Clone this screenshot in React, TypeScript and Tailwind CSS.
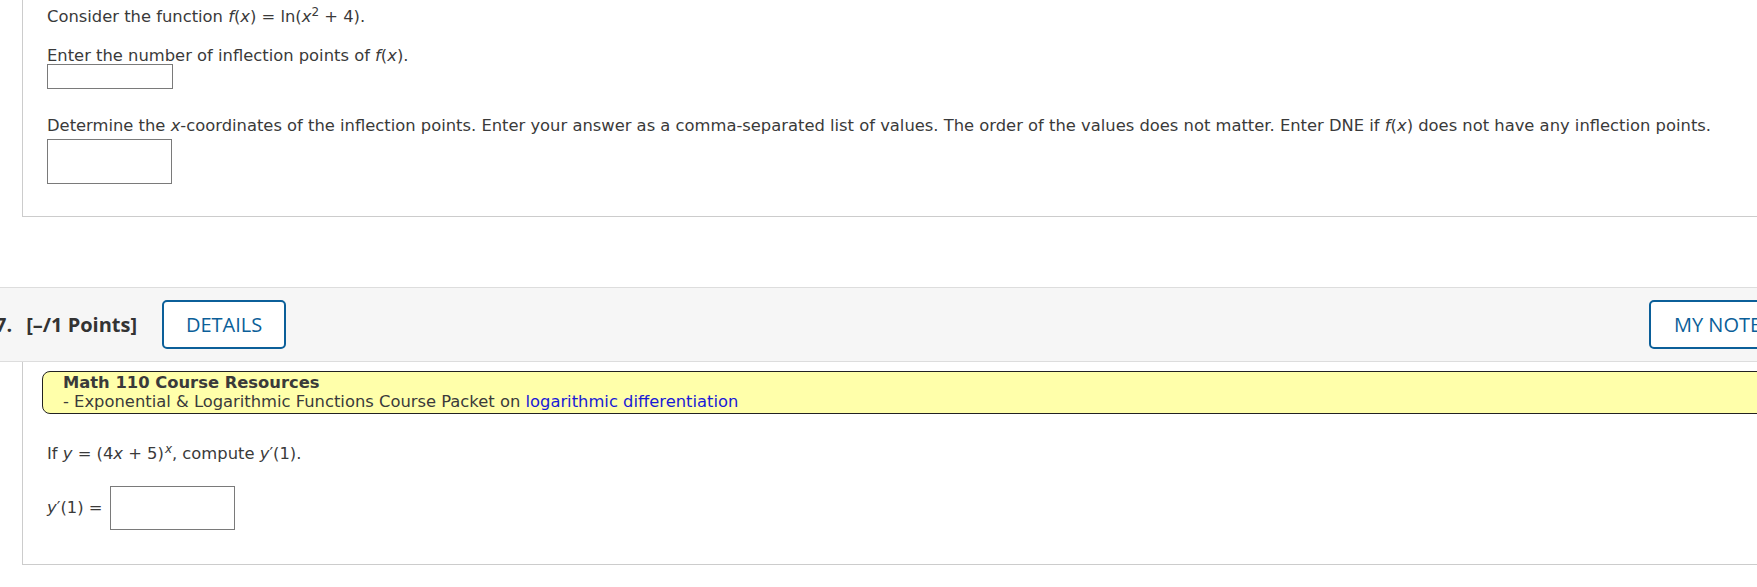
import React from "react";

const body = { fontFamily: '"DejaVu Sans", Verdana, sans-serif' };
const ui = { fontFamily: '"Open Sans", sans-serif' };

function AnswerBox({ w, h }: { w: string; h: string }) {
  return <div className={`${w} ${h} border border-[#7a7a7a] bg-white`} />;
}

export default function App() {
  return (
    <div
      className="w-full h-[587px] overflow-hidden bg-white text-[#3a3a3a] text-[16.35px]"
      style={body}
    >
      {/* QUESTION 6 (bottom part) */}
      <div className="ml-[22px] border-l border-b border-[#cccccc] pl-[24px] pt-[6px] h-[217px]">
        <p className="leading-[22px]">
          Consider the function <i>f</i>(<i>x</i>) = ln(<i>x</i>
          <sup className="text-[12px]">2</sup> + 4).
        </p>
        <p className="leading-[22px] mt-[17px]">
          Enter the number of inflection points of <i>f</i>(<i>x</i>).
        </p>
        <div className="-mt-[3px]">
          <AnswerBox w="w-[126px]" h="h-[25px]" />
        </div>
        <p className="leading-[22px] mt-[26px]">
          Determine the <i>x</i>-coordinates of the inflection points. Enter
          your answer as a comma-separated list of values. The order of the
          values does not matter. Enter DNE if <i>f</i>(<i>x</i>) does not have
          any inflection points.
        </p>
        <div className="mt-[2px]">
          <AnswerBox w="w-[125px]" h="h-[45px]" />
        </div>
      </div>

      <div className="h-[70px]" />

      {/* QUESTION 7 HEADER */}
      <div
        className="h-[75px] border-y border-[#dddddd] bg-[#f6f6f6] flex items-center"
        style={ui}
      >
        <span className="-ml-[5px] font-bold text-[20px] text-[#333333]">
          7.
        </span>
        <span className="ml-[14px] font-bold text-[20px] text-[#333333]">
          [–/1 Points]
        </span>
        <button className="ml-[25px] w-[124px] h-[49px] border-2 border-[#0b5f99] rounded-[5px] text-[20px] font-medium text-[#0b5f99] bg-white">
          DETAILS
        </button>
        <button className="ml-auto -mr-[60px] w-[168px] h-[49px] border-2 border-[#0b5f99] rounded-[5px] text-[20px] font-medium text-[#0b5f99] bg-white text-left pl-[23px] whitespace-nowrap">
          MY NOTES
        </button>
      </div>

      {/* QUESTION 7 BODY */}
      <div className="ml-[22px] border-l border-b border-[#cccccc] pt-[9px] h-[203px]">
        <div className="ml-[19px] -mr-[40px] border border-[#222222] rounded-l-[8px] bg-[#ffffaa] pl-[20px] pt-[1px] pb-[2px]">
          <div className="font-bold leading-[19px]">Math 110 Course Resources</div>
          <div className="leading-[19px]">
            - Exponential &amp; Logarithmic Functions Course Packet on{" "}
            <a className="text-[#1a1ad6]">logarithmic differentiation</a>
          </div>
        </div>
        <div className="pl-[24px]">
          <p className="leading-[22px] mt-[29px]">
            If <i>y</i> = (4<i>x</i> + 5)
            <sup className="text-[12px] ml-[1px]">
              <i>x</i>
            </sup>
            , compute <i>y</i>′(1).
          </p>
          <div className="flex items-center mt-[21px]">
            <span className="mr-[8px]">
              <i>y</i>′(1) =
            </span>
            <AnswerBox w="w-[125px]" h="h-[44px]" />
          </div>
        </div>
      </div>
    </div>
  );
}
